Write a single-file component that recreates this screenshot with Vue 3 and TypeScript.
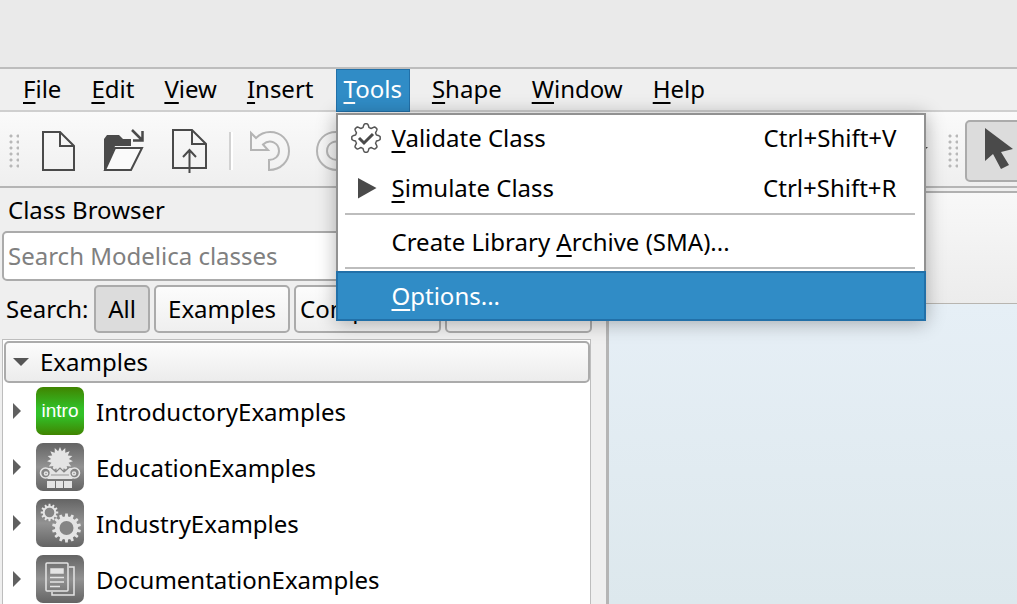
<script setup lang="ts">
import { ref } from 'vue'

interface Label {
  before: string
  key: string
  after: string
}
interface Action extends Label {
  icon?: 'validate' | 'simulate'
  shortcut?: string
  separated?: boolean
  active?: boolean
}

const menus: Label[] = [
  { before: '', key: 'F', after: 'ile' },
  { before: '', key: 'E', after: 'dit' },
  { before: '', key: 'V', after: 'iew' },
  { before: '', key: 'I', after: 'nsert' },
  { before: '', key: 'T', after: 'ools' },
  { before: '', key: 'S', after: 'hape' },
  { before: '', key: 'W', after: 'indow' },
  { before: '', key: 'H', after: 'elp' },
]
const openMenu = 4

const actions: Action[] = [
  { before: '', key: 'V', after: 'alidate Class', icon: 'validate', shortcut: 'Ctrl+Shift+V' },
  { before: '', key: 'S', after: 'imulate Class', icon: 'simulate', shortcut: 'Ctrl+Shift+R' },
  { before: 'Create Library ', key: 'A', after: 'rchive (SMA)...', separated: true },
  { before: '', key: 'O', after: 'ptions...', separated: true, active: true },
]

const libraries = [
  { name: 'IntroductoryExamples', icon: 'intro' },
  { name: 'EducationExamples', icon: 'education' },
  { name: 'IndustryExamples', icon: 'industry' },
  { name: 'DocumentationExamples', icon: 'documentation' },
]

const query = ref('')

/** Outline of a cog with flat-topped teeth. */
function cog(cx: number, cy: number, outer: number, inner: number, teeth: number): string {
  const points: string[] = []
  const step = (Math.PI * 2) / teeth
  const corners: [number, number][] = [[-0.3, inner], [-0.2, outer], [0.2, outer], [0.3, inner]]
  for (let i = 0; i < teeth; i++) {
    for (const [offset, r] of corners) {
      const a = (i + offset) * step - Math.PI / 2
      points.push(`${(cx + r * Math.cos(a)).toFixed(2)} ${(cy + r * Math.sin(a)).toFixed(2)}`)
    }
  }
  return `M${points.join('L')}Z`
}

/** Outline of a pointed star. */
function star(cx: number, cy: number, outer: number, inner: number, tips: number): string {
  const points: string[] = []
  for (let i = 0; i < tips * 2; i++) {
    const r = i % 2 ? inner : outer
    const a = (i * Math.PI) / tips - Math.PI / 2
    points.push(`${(cx + r * Math.cos(a)).toFixed(2)} ${(cy + r * Math.sin(a)).toFixed(2)}`)
  }
  return `M${points.join('L')}Z`
}

/** Wavy rosette whose radius swings between two values. */
function rosette(cx: number, cy: number, outer: number, inner: number, lobes: number): string {
  const points: string[] = []
  const mid = (outer + inner) / 2
  const swing = (outer - inner) / 2
  for (let i = 0; i < 160; i++) {
    const a = (i / 160) * Math.PI * 2
    const wave = Math.max(-1, Math.min(1, 1.5 * Math.cos(lobes * a)))
    const r = mid + swing * wave
    points.push(`${(cx + r * Math.sin(a)).toFixed(2)} ${(cy - r * Math.cos(a)).toFixed(2)}`)
  }
  return `M${points.join('L')}Z`
}

const badge = rosette(15, 15, 14.2, 10.8, 8)
const bigCog = cog(30.5, 29, 14.5, 11.5, 14)
const smallCog = cog(13.5, 13.5, 8.8, 6.8, 12)
const sun = star(24, 17, 13, 9, 15)
</script>

<template>
  <div class="window">
    <header class="title-area"></header>

    <nav class="menubar">
      <div v-for="(m, i) in menus" :key="m.after" class="menu">
        <button type="button" class="menu-title" :class="{ open: i === openMenu }">
          {{ m.before }}<span class="mnemonic">{{ m.key }}</span>{{ m.after }}
        </button>
        <div v-if="i === openMenu" class="dropdown">
          <template v-for="a in actions" :key="a.after">
            <div v-if="a.separated" class="separator"></div>
            <button type="button" class="action" :class="{ active: a.active }">
              <span class="action-icon">
                <svg v-if="a.icon === 'validate'" width="30" height="30" viewBox="0 0 30 30">
                  <path :d="badge" fill="none" stroke="#555" stroke-width="1.5" stroke-linejoin="round" />
                  <path d="M8 15L13 20L22 11" fill="none" stroke="#4a4a4a" stroke-width="3" />
                </svg>
                <svg v-else-if="a.icon === 'simulate'" width="30" height="30" viewBox="0 0 30 30">
                  <path d="M7 5L25.500 15L7 25.500Z" fill="#4a4a4a" />
                </svg>
              </span>
              <span class="action-text">{{ a.before }}<span class="mnemonic">{{ a.key }}</span>{{ a.after }}</span>
              <span class="shortcut">{{ a.shortcut }}</span>
            </button>
          </template>
        </div>
      </div>
    </nav>

    <div class="toolbar">
      <span class="grip"></span>
      <div class="tools">
        <button type="button" class="tool" aria-label="New">
          <svg width="44" height="48" viewBox="0 0 44 48" fill="none" stroke="#4a4a4a" stroke-width="2">
            <path d="M8 5H25L39 19V43H8ZM25 5V19H39" />
          </svg>
        </button>
        <button type="button" class="tool" aria-label="Open">
          <svg width="44" height="48" viewBox="0 0 44 48">
            <path d="M3 43V12L6 8H18L22 12H30V19H14L5 43Z" fill="#4a4a4a" />
            <path d="M14 21H41L30 43H4Z" fill="#fafafa" stroke="#4a4a4a" stroke-width="2" />
            <path d="M31 3L41 13M32 13.500H41.500V4" fill="none" stroke="#4a4a4a" stroke-width="2.500" />
          </svg>
        </button>
        <button type="button" class="tool" aria-label="Save">
          <svg width="44" height="48" viewBox="0 0 44 48" fill="none" stroke="#4a4a4a" stroke-width="2">
            <path d="M6 3H25L39 17V41H6ZM25 3V17H39M22.500 46V24M16 30L22.500 23L29 30" />
          </svg>
        </button>
      </div>
      <span class="divider"></span>
      <div class="tools history">
        <button type="button" class="tool" aria-label="Undo" disabled>
          <svg width="44" height="48" viewBox="0 0 44 48" fill="none" stroke="#b4b4b4" stroke-width="2">
            <path d="M3 6V23H20L15 17.500C22 11 31 16 31 24C31 29 27 33 21 33V43C33 43 41 34 41 24C41 13 33 5 22 5C16 5 12 7 8 11Z" />
          </svg>
        </button>
        <button type="button" class="tool" aria-label="Redo" disabled>
          <svg width="44" height="48" viewBox="0 0 44 48" fill="none" stroke="#b4b4b4" stroke-width="2">
            <path d="M41 6V23H24L29 17.500C22 11 13 16 13 24C13 29 17 33 23 33V43C11 43 3 34 3 24C3 13 11 5 22 5C28 5 32 7 36 11Z" />
          </svg>
        </button>
      </div>
      <span class="more"></span>
      <span class="grip"></span>
      <button type="button" class="pointer" aria-label="Select">
        <svg width="60" height="58" viewBox="0 0 60 58">
          <path d="M18 6L46 27L34 30L42 43L34 47L26 32L18 39Z" fill="#4a4a4a" />
        </svg>
      </button>
    </div>

    <main class="workspace">
      <section class="dock">
        <h2 class="dock-title">Class Browser</h2>
        <input v-model="query" class="search" type="text" placeholder="Search Modelica classes" aria-label="Search Modelica classes" />
        <div class="filters">
          <span class="filter-label">Search:</span>
          <button type="button" class="filter all">All</button>
          <button type="button" class="filter examples">Examples</button>
          <button type="button" class="filter wide">Components</button>
          <button type="button" class="filter wide"></button>
        </div>
        <div class="tree">
          <button type="button" class="group">
            <svg width="16" height="8" viewBox="0 0 16 8"><path d="M0 0H16L8 8Z" fill="#555" /></svg>
            Examples
          </button>
          <ul class="items">
            <li v-for="lib in libraries" :key="lib.name" class="item">
              <svg class="expander" width="8" height="16" viewBox="0 0 8 16"><path d="M0 0L8 8L0 16Z" fill="#606060" /></svg>
              <span class="lib-icon" :class="{ green: lib.icon === 'intro' }">
                <template v-if="lib.icon === 'intro'">intro</template>
                <svg v-else-if="lib.icon === 'education'" width="48" height="48" viewBox="0 0 48 48">
                  <path :d="sun" fill="#e4e4e4" />
                  <path d="M9 25H16L20 29L24 25L28 29L32 25H39V33L36 36H12L9 33Z" fill="#e4e4e4" />
                  <path d="M15 24.500L20 29L24 25L28 29L33 24.500" fill="none" stroke="#858585" stroke-width="1.200" />
                  <path d="M15 32H33" stroke="#999" />
                  <g fill="#858585" stroke="#e4e4e4" stroke-width="1.600">
                    <circle cx="9.500" cy="30" r="5" />
                    <circle cx="38.500" cy="30" r="5" />
                    <circle cx="10" cy="30.500" r="1.500" />
                    <circle cx="38" cy="30.500" r="1.500" />
                  </g>
                  <path d="M11 38H19V45H11ZM20 38H27V45H20ZM28 38H36V45H28Z" fill="#e4e4e4" />
                </svg>
                <svg v-else-if="lib.icon === 'industry'" width="48" height="48" viewBox="0 0 48 48">
                  <path :d="bigCog" fill="#e4e4e4" />
                  <circle cx="30.500" cy="29" r="7" fill="#858585" />
                  <path :d="smallCog" fill="#e4e4e4" />
                  <circle cx="13.500" cy="13.500" r="4.800" fill="#858585" />
                </svg>
                <svg v-else width="48" height="48" viewBox="0 0 48 48" fill="none" stroke="#e4e4e4" stroke-width="1.500">
                  <path d="M33 12H38V40H16V37" />
                  <rect x="10" y="8" width="22" height="28" rx="1" />
                  <path d="M15 14H27V18H15Z" fill="#e4e4e4" />
                  <path d="M14 22.500H28M14 27H28M14 31.500H24" />
                </svg>
              </span>
              <span class="lib-name">{{ lib.name }}</span>
            </li>
          </ul>
        </div>
      </section>
      <section class="editor">
        <div class="editor-bar"></div>
        <div class="canvas"></div>
      </section>
    </main>
  </div>
</template>

<style>
body {
  margin: 0;
  overflow: hidden;
}
</style>

<style scoped>
.window {
  display: flex;
  flex-direction: column;
  height: 100vh;
  overflow: hidden;
  background: #efefef;
  color: #000;
  font: 24px/32px "Noto Sans", sans-serif;
}
.window *,
.window {
  box-sizing: border-box;
}
button,
input {
  margin: 0;
  padding: 0;
  border: 0;
  background: none;
  color: inherit;
  font: inherit;
}
svg {
  display: block;
  flex: none;
}
.mnemonic {
  text-decoration: underline 2px;
  text-underline-offset: 4px;
  text-decoration-skip-ink: none;
}
.title-area {
  flex: none;
  height: 69px;
  background: #eaeaea;
  border-bottom: 2px solid #bdbdbd;
}
.menubar {
  position: relative;
  z-index: 2;
  display: flex;
  flex: none;
  gap: 14px;
  height: 43px;
  padding-left: 15px;
  border-bottom: 2px solid #cfcfcf;
}
.menu {
  position: relative;
}
.menu-title {
  height: 43px;
  padding: 0 8px 4px;
  white-space: nowrap;
}
.menu-title.open {
  color: #fff;
  background: #308cc6;
  box-shadow: inset 0 0 0 1px #2270a8;
}
.dropdown {
  position: absolute;
  top: 44px;
  left: 0;
  width: 590px;
  background: #fff;
  box-shadow: inset 0 0 0 2px #919191, 0 2px 18px rgba(0, 0, 0, 0.3);
}
.action {
  display: flex;
  align-items: center;
  width: 100%;
  height: 50px;
  padding: 0 29px 0 15px;
  text-align: left;
}
.action.active {
  color: #fff;
  background: #308cc6;
  box-shadow: inset 0 0 0 2px #2270a8;
}
.action-icon {
  width: 41px;
}
.action-text {
  flex: 1;
}
.separator {
  height: 4px;
  margin: 0 11px 0 9px;
  border-top: 2px solid #bdbdbd;
}
.toolbar {
  display: flex;
  flex: none;
  align-items: center;
  height: 76px;
  padding: 4px 0 0 9px;
  overflow: hidden;
  background: linear-gradient(#fafafa, #efefef);
  border-bottom: 2px solid #b5b5b5;
}
.toolbar > * {
  flex: none;
}
.grip {
  width: 10px;
  height: 34px;
  background: radial-gradient(circle at 2px 2px, #b8b8b8 1px, transparent 2px) 0 0 / 7px 6px;
}
.tools {
  display: flex;
  gap: 22px;
  margin-left: 16px;
}
.tool {
  width: 44px;
  height: 48px;
}
.divider {
  width: 4px;
  height: 38px;
  margin-left: 18px;
  background: linear-gradient(90deg, #d2d2d2 50%, #fff 50%);
}
.history {
  margin-left: 15px;
}
.more {
  margin-left: 562px;
  border: 4px solid transparent;
  border-top-color: #4a4a4a;
}
.toolbar .more + .grip {
  margin-left: 20px;
}
.pointer {
  width: 66px;
  height: 62px;
  margin-left: 7px;
  background: #dcdcdc;
  border: 2px solid #ababab;
  border-radius: 5px;
}
.workspace {
  display: flex;
  flex: 1;
  min-height: 0;
}
.dock {
  flex: none;
  width: 609px;
  padding: 0 14px 0 2px;
  border-right: 3px solid #b5b5b5;
}
.dock-title {
  margin: 0;
  padding: 6px 6px 5px;
  font: inherit;
}
.search {
  display: block;
  width: 100%;
  height: 50px;
  padding: 0 4px 2px;
  background: #fff;
  border: 2px solid #ababab;
  border-radius: 5px;
}
.search::placeholder {
  color: #808080;
  opacity: 1;
}
.filters {
  display: flex;
  gap: 4px;
  align-items: center;
  padding: 4px 0 6px 4px;
}
.filter-label {
  width: 84px;
}
.filter {
  height: 48px;
  background: linear-gradient(#fcfcfc, #efefef);
  border: 2px solid #ababab;
  border-radius: 5px;
}
.all {
  width: 56px;
  background: #dcdcdc;
}
.examples {
  width: 136px;
}
.wide {
  flex: 1;
  min-width: 0;
  padding-left: 4px;
  text-align: left;
}
.tree {
  height: 300px;
  padding: 1px 0 0 1px;
  margin-right: 1px;
  background: #fff;
  border: 1px solid #bdbdbd;
}
.group {
  display: flex;
  gap: 11px;
  align-items: center;
  width: 100%;
  height: 42px;
  padding-left: 7px;
  background: linear-gradient(#fcfcfc, #ececec);
  border: 2px solid #ababab;
  border-radius: 5px;
}
.items {
  margin: 0;
  padding: 0;
  list-style: none;
}
.item {
  display: flex;
  align-items: center;
  height: 56px;
  padding-left: 9px;
}
.lib-name {
  padding-top: 2px;
}
.lib-icon {
  width: 48px;
  height: 48px;
  margin: 0 12px 0 15px;
  overflow: hidden;
  border-radius: 7px;
  background: linear-gradient(#646464, #929292 50%, #646464);
}
.green {
  color: #fff;
  background: linear-gradient(#408400, #32c028 45%, #32c028 60%, #408400);
  font: 19px/48px "Liberation Sans", sans-serif;
  text-align: center;
}
.editor {
  display: flex;
  flex: 1;
  flex-direction: column;
  padding-top: 3px;
}
.editor-bar {
  height: 113px;
  background: linear-gradient(#f8f8f8, #ececec);
  border-top: 2px solid #b0b0b0;
  border-bottom: 1px solid #b8b5b0;
}
.canvas {
  flex: 1;
  background: linear-gradient(#e6eff6, #dde8ed);
}
</style>
